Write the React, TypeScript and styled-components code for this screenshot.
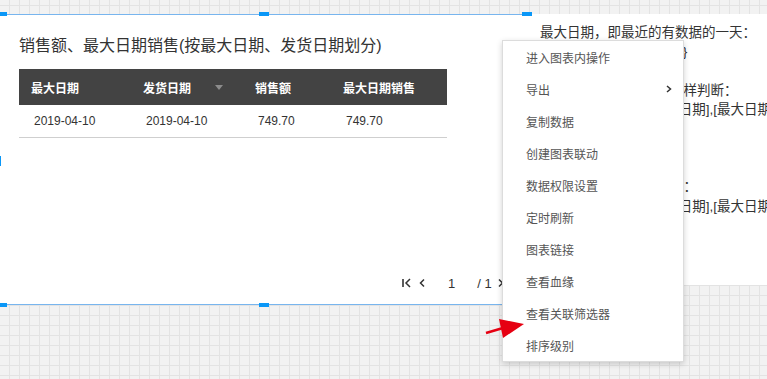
import styled, {createGlobalStyle} from "styled-components";

const GlobalStyle = createGlobalStyle`
    body {
        margin: 0;
        font-family: "Liberation Sans", "Noto Sans CJK SC", sans-serif;
    }
`;

const Page = styled.div`
    position: relative;
    width: 767px;
    height: 379px;
    overflow: hidden;
    background-color: #f2f2f2;
    background-image: linear-gradient(to right, #e3e3e3 1px, transparent 1px),
        linear-gradient(to bottom, #e3e3e3 1px, transparent 1px);
    background-size: 10px 10px;
    background-position: 9px 5px;
`;

const Canvas = styled.div`
    display: flex;
    align-items: flex-start;
    padding-top: 14px;
`;

const Widget = styled.div`
    position: relative;
    flex: none;
    box-sizing: border-box;
    width: 531px;
    height: 291px;
    margin-left: -4px;
    padding-left: 23px;
    background: #fff;
    border-top: 1px solid #78b5ee;
    border-bottom: 1px solid #78b5ee;
    display: flex;
    flex-direction: column;
`;

const Handle = styled.span<{ $left: number; $top: number; $vertical?: boolean }>`
    position: absolute;
    left: ${p => p.$left}px;
    top: ${p => p.$top}px;
    width: ${p => (p.$vertical ? 4 : 10)}px;
    height: ${p => (p.$vertical ? 10 : 4)}px;
    background: #0a97f7;
`;

const Title = styled.div`
    margin-top: 20px;
    font-size: 16px;
    line-height: 22px;
    color: #333;
    white-space: nowrap;
`;

const Table = styled.div`
    margin-top: 12px;
    width: 428px;
`;

const Row = styled.div<{ $head?: boolean }>`
    display: grid;
    grid-template-columns: 112px 112px 88px 116px;
    box-sizing: border-box;
    height: ${p => (p.$head ? 36 : 33)}px;
    background: ${p => (p.$head ? "#434343" : "#fff")};
    border-bottom: ${p => (p.$head ? "none" : "1px solid #cfcfcf")};
    color: ${p => (p.$head ? "#fff" : "#333")};
    font-size: 12px;
    font-weight: ${p => (p.$head ? "bold" : "normal")};
`;

const Cell = styled.div<{ $pad: number }>`
    display: flex;
    align-items: center;
    padding-left: ${p => p.$pad}px;
    white-space: nowrap;
`;

const SortArrow = styled.span`
    margin-left: auto;
    margin-right: 20px;
    width: 0;
    height: 0;
    border-left: 4.5px solid transparent;
    border-right: 4.5px solid transparent;
    border-top: 5px solid #8c8c8c;
`;

const Pager = styled.div`
    margin-top: auto;
    margin-bottom: 11px;
    height: 20px;
    padding-left: 383px;
    display: flex;
    align-items: center;
    font-size: 13px;
    color: #333;
    white-space: nowrap;
`;

const PagerText = styled.span<{ $gap: number }>`
    margin-left: ${p => p.$gap}px;
`;

const PagerIcon = styled.svg<{ $gap?: number }>`
    flex: none;
    margin-left: ${p => p.$gap ?? 0}px;
`;

const Notes = styled.div`
    flex: 1;
    box-sizing: border-box;
    height: 271px;
    padding: 9px 0 0 8px;
    background: #fff;
    font-size: 13.5px;
    line-height: 19.3px;
    color: #333;
    white-space: nowrap;
    overflow: hidden;
`;

const NoteLine = styled.div<{ $indent?: number }>`
    height: 19.3px;
    padding-left: ${p => p.$indent ?? 0}px;
`;

const Menu = styled.ul`
    position: absolute;
    left: 502px;
    top: 40px;
    width: 180px;
    margin: 0;
    padding: 0;
    list-style: none;
    background: #fff;
    border: 1px solid #dcdcdc;
    box-shadow: 0 2px 6px rgba(0, 0, 0, 0.18);
`;

const MenuItem = styled.li`
    display: flex;
    align-items: center;
    height: 32px;
    padding: 0 11px 0 23px;
    font-size: 12px;
    color: #555;
    white-space: nowrap;
`;

const SubArrow = styled.svg`
    margin-left: auto;
`;

const Pointer = styled.svg`
    position: absolute;
    left: 484px;
    top: 316px;
`;

const columns = [
    {head: "最大日期", value: "2019-04-10"},
    {head: "发货日期", value: "2019-04-10", sort: true},
    {head: "销售额", value: "749.70"},
    {head: "最大日期销售", value: "749.70"},
];

const notes = [
    {text: "最大日期，即最近的有数据的一天：", indent: 5},
    {text: "{FIXED:MAX([订单日期])}"},
    {text: ""},
    {text: "最大日期的销售额需要这样判断："},
    {text: "销售额：IF(DATEDIFF([日期],[最大日期],'D')=0"},
    {text: ""},
    {text: ""},
    {text: ""},
    {text: "发货日期销售额如下判断："},
    {text: "发货额：IF(DATEDIFF([日期],[最大日期],'D')=1"},
];

const menuItems = [
    "进入图表内操作",
    "导出",
    "复制数据",
    "创建图表联动",
    "数据权限设置",
    "定时刷新",
    "图表链接",
    "查看血缘",
    "查看关联筛选器",
    "排序级别",
];

const Chevron = ({dir}: { dir: "left" | "right" }) => (
    <polyline
        points={dir === "left" ? "5,1 1.5,4.5 5,8" : "1,1 4.5,4.5 1,8"}
        fill="none"
        stroke="#333"
        strokeWidth="1.5"
    />
);

export default function App() {
    return (
        <Page>
            <GlobalStyle/>
            <Canvas>
                <Widget>
                    <Handle $left={1} $top={-3}/>
                    <Handle $left={263} $top={-3}/>
                    <Handle $left={526} $top={-3}/>
                    <Handle $left={1} $top={141} $vertical/>
                    <Handle $left={1} $top={288}/>
                    <Handle $left={263} $top={288}/>
                    <Handle $left={526} $top={288}/>

                    <Title>销售额、最大日期销售(按最大日期、发货日期划分)</Title>
                    <Table>
                        <Row $head>
                            {columns.map(c => (
                                <Cell key={c.head} $pad={12}>
                                    {c.head}
                                    {c.sort && <SortArrow/>}
                                </Cell>
                            ))}
                        </Row>
                        <Row>
                            {columns.map(c => (
                                <Cell key={c.head} $pad={15}>{c.value}</Cell>
                            ))}
                        </Row>
                    </Table>

                    <Pager>
                        <PagerIcon width="10" height="10" viewBox="0 0 10 10">
                            <line x1="1" y1="1" x2="1" y2="9" stroke="#333" strokeWidth="1.6"/>
                            <polyline points="8,1 4,5 8,9" fill="none" stroke="#333" strokeWidth="1.5"/>
                        </PagerIcon>
                        <PagerIcon $gap={7} width="6" height="10" viewBox="0 0 6 9">
                            <Chevron dir="left"/>
                        </PagerIcon>
                        <PagerText $gap={23}>1</PagerText>
                        <PagerText $gap={22}>/ 1</PagerText>
                        <PagerIcon $gap={6} width="6" height="10" viewBox="0 0 6 9">
                            <Chevron dir="right"/>
                        </PagerIcon>
                        <PagerIcon $gap={6} width="10" height="10" viewBox="0 0 10 10">
                            <polyline points="2,1 6,5 2,9" fill="none" stroke="#333" strokeWidth="1.5"/>
                            <line x1="9" y1="1" x2="9" y2="9" stroke="#333" strokeWidth="1.6"/>
                        </PagerIcon>
                    </Pager>
                </Widget>

                <Notes>
                    {notes.map((n, i) => (
                        <NoteLine key={i} $indent={n.indent}>{n.text}</NoteLine>
                    ))}
                </Notes>
            </Canvas>

            <Menu>
                {menuItems.map(item => (
                    <MenuItem key={item}>
                        {item}
                        {item === "导出" && (
                            <SubArrow width="6" height="8" viewBox="0 0 6 8">
                                <polyline points="1,1 4.5,4 1,7" fill="none" stroke="#333" strokeWidth="1.5"/>
                            </SubArrow>
                        )}
                    </MenuItem>
                ))}
            </Menu>

            <Pointer width="44" height="26" viewBox="0 0 44 26">
                <line x1="2" y1="17" x2="19" y2="12" stroke="#e60012" strokeWidth="2.5"/>
                <polygon points="15,3 40,8 19,22" fill="#e60012"/>
            </Pointer>
        </Page>
    );
}
